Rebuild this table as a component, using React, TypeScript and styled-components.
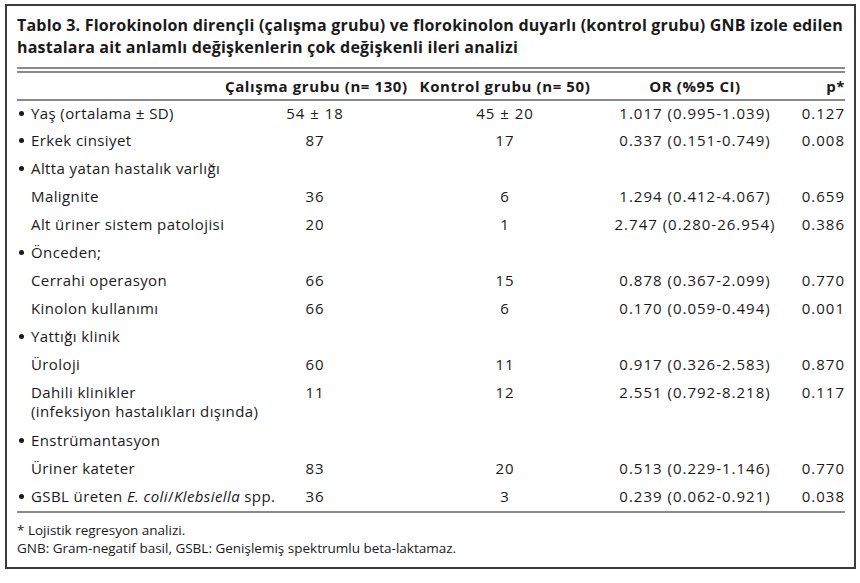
import styled, { createGlobalStyle } from 'styled-components';

const GlobalStyle = createGlobalStyle`
    body {
        margin: 0;
        background: #ffffff;
        font-family: "Open Sans", "Noto Sans", sans-serif;
        color: #1a1a1a;
    }
`;

type Row = {
    label: React.ReactNode;
    bullet?: boolean;
    study?: string;
    control?: string;
    or?: string;
    p?: string;
    tall?: boolean;
};

const rows: Row[] = [
    { label: 'Yaş (ortalama ± SD)', bullet: true, study: '54 ± 18', control: '45 ± 20', or: '1.017 (0.995-1.039)', p: '0.127' },
    { label: 'Erkek cinsiyet', bullet: true, study: '87', control: '17', or: '0.337 (0.151-0.749)', p: '0.008' },
    { label: 'Altta yatan hastalık varlığı', bullet: true },
    { label: 'Malignite', study: '36', control: '6', or: '1.294 (0.412-4.067)', p: '0.659' },
    { label: 'Alt üriner sistem patolojisi', study: '20', control: '1', or: '2.747 (0.280-26.954)', p: '0.386' },
    { label: 'Önceden;', bullet: true },
    { label: 'Cerrahi operasyon', study: '66', control: '15', or: '0.878 (0.367-2.099)', p: '0.770' },
    { label: 'Kinolon kullanımı', study: '66', control: '6', or: '0.170 (0.059-0.494)', p: '0.001' },
    { label: 'Yattığı klinik', bullet: true },
    { label: 'Üroloji', study: '60', control: '11', or: '0.917 (0.326-2.583)', p: '0.870' },
    {
        label: (
            <>
                Dahili klinikler
                <br />
                (infeksiyon hastalıkları dışında)
            </>
        ),
        study: '11',
        control: '12',
        or: '2.551 (0.792-8.218)',
        p: '0.117',
        tall: true,
    },
    { label: 'Enstrümantasyon', bullet: true },
    { label: 'Üriner kateter', study: '83', control: '20', or: '0.513 (0.229-1.146)', p: '0.770' },
    {
        label: (
            <>
                GSBL üreten <em>E. coli</em>/<em>Klebsiella</em> spp.
            </>
        ),
        bullet: true,
        study: '36',
        control: '3',
        or: '0.239 (0.062-0.921)',
        p: '0.038',
    },
];

const App = () => {
    return (
        <>
            <GlobalStyle />
            <Frame>
                <Caption>
                    Tablo 3. Florokinolon dirençli (çalışma grubu) ve florokinolon duyarlı (kontrol grubu) GNB izole edilen
                    <br />
                    hastalara ait anlamlı değişkenlerin çok değişkenli ileri analizi
                </Caption>
                <Table>
                    <colgroup>
                        <col style={{ width: 208 }} />
                        <col style={{ width: 180 }} />
                        <col style={{ width: 200 }} />
                        <col style={{ width: 180 }} />
                        <col style={{ width: 60 }} />
                    </colgroup>
                    <thead>
                        <tr>
                            <HeadCell />
                            <HeadCell>Çalışma grubu (n= 130)</HeadCell>
                            <HeadCell>Kontrol grubu (n= 50)</HeadCell>
                            <HeadCell>OR (%95 CI)</HeadCell>
                            <HeadCell $right>p*</HeadCell>
                        </tr>
                    </thead>
                    <tbody>
                        {rows.map((row, i) => (
                            <BodyRow key={i} $tall={row.tall}>
                                <LabelCell $bullet={row.bullet}>
                                    {row.bullet && <Bullet />}
                                    {row.label}
                                </LabelCell>
                                <Cell>{row.study}</Cell>
                                <Cell>{row.control}</Cell>
                                <Cell>{row.or}</Cell>
                                <Cell $right>{row.p}</Cell>
                            </BodyRow>
                        ))}
                    </tbody>
                </Table>
                <Notes>
                    <Note>* Lojistik regresyon analizi.</Note>
                    <Note>GNB: Gram-negatif basil, GSBL: Genişlemiş spektrumlu beta-laktamaz.</Note>
                </Notes>
            </Frame>
        </>
    );
};

export default App;

const Frame = styled.div`
    box-sizing: border-box;
    margin: 4px 0 0 5px;
    width: 851px;
    height: 565px;
    border: 2px solid #3c3c3c;
    padding: 8px 8px 0 10px;
`;

const Caption = styled.div`
    font-weight: 700;
    font-size: 16px;
    line-height: 22px;
    letter-spacing: 0.2px;
    color: #1a1a1a;
    padding-bottom: 9px;
    white-space: nowrap;
`;

const Table = styled.table`
    width: 828px;
    border-collapse: collapse;
    table-layout: fixed;
    border-top: 6px double #8a8a8a;
    border-bottom: 2px solid #8a8a8a;
    font-size: 15px;
    letter-spacing: 0.4px;
`;

const HeadCell = styled.th<{ $right?: boolean }>`
    font-weight: 700;
    text-align: ${(p) => (p.$right ? 'right' : 'center')};
    padding: 4px 0 3px;
    line-height: 19px;
    letter-spacing: 0.6px;
    border-bottom: 2px solid #8a8a8a;
    white-space: nowrap;
`;

const BodyRow = styled.tr<{ $tall?: boolean }>`
    height: ${(p) => (p.$tall ? '48px' : '28px')};
`;

const Cell = styled.td<{ $right?: boolean }>`
    padding: 3px 0 0;
    text-align: ${(p) => (p.$right ? 'right' : 'center')};
    vertical-align: top;
    line-height: 19px;
    letter-spacing: 1px;
    white-space: nowrap;
`;

const LabelCell = styled.td<{ $bullet?: boolean }>`
    padding: 3px 0 0 ${(p) => (p.$bullet ? '0' : '14px')};
    vertical-align: top;
    line-height: 19px;
    white-space: nowrap;

    em {
        font-style: italic;
    }
`;

const Bullet = styled.span`
    display: inline-block;
    width: 5px;
    height: 5px;
    border-radius: 50%;
    background: #1a1a1a;
    margin: 0 7px 0 2px;
    vertical-align: 3px;
`;

const Notes = styled.div`
    padding-top: 8px;
    font-size: 13.5px;
    line-height: 18px;
`;

const Note = styled.div``;
